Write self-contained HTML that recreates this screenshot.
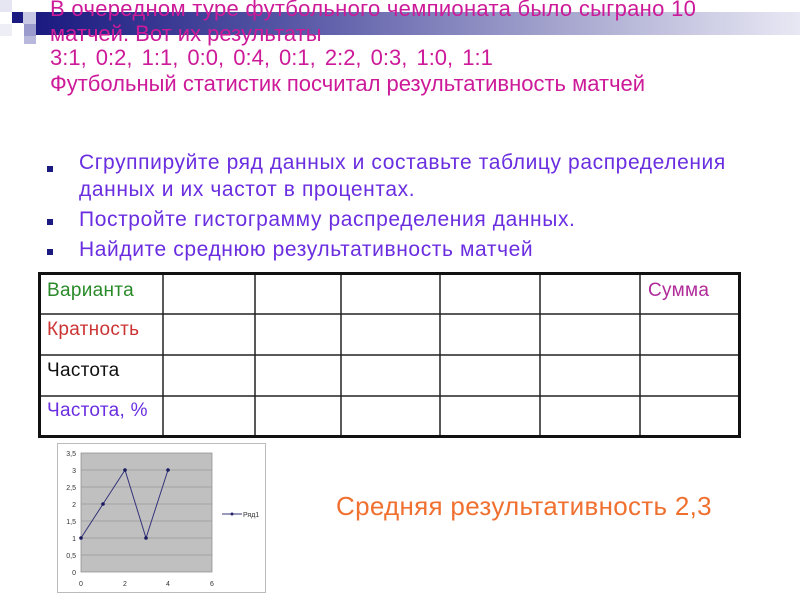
<!DOCTYPE html>
<html><head><meta charset="utf-8"><style>
body{margin:0;width:800px;height:600px;position:relative;background:#fff;overflow:hidden;font-family:"Liberation Sans",sans-serif}
.a{position:absolute;white-space:nowrap}
.t{color:#cc1a99;font-size:22px;line-height:25px}
.b{color:#6a2ee0;font-size:21px;letter-spacing:0.6px;line-height:24px}
.sq{position:absolute;width:6px;height:6px;background:#1a1a80}
.c{position:absolute;font-size:19px;line-height:22px;letter-spacing:0.3px}
</style></head><body>
<div class="a" style="left:36px;top:12px;width:764px;height:23px;background:linear-gradient(90deg,#1a1a80 0%,#5a5aa8 35%,#a8a8d0 70%,#e8e8f4 100%)"></div>
<div class="a" style="left:0;top:0;width:12px;height:12px;background:#e6e6f2"></div>
<div class="a" style="left:12px;top:12px;width:11px;height:11px;background:#1a1a80"></div>
<div class="a" style="left:23px;top:12px;width:13px;height:12px;background:#c8c8e4"></div>
<div class="a" style="left:24px;top:24px;width:12px;height:12px;background:#9a9acc"></div>
<div class="a" style="left:0;top:24px;width:12px;height:12px;background:#eeeef6"></div>
<div class="a" style="left:24px;top:36px;width:12px;height:8px;background:#b8b8dc"></div>
<div class="a t" style="left:50px;top:-4px;letter-spacing:0.3px">В очередном туре футбольного чемпионата было сыграно 10</div>
<div class="a t" style="left:50px;top:21px">матчей. Вот их результаты</div>
<div class="a t" style="left:50px;top:45px;word-spacing:3px">3:1, 0:2, 1:1, 0:0, 0:4, 0:1, 2:2, 0:3, 1:0, 1:1</div>
<div class="a t" style="left:50px;top:71px">Футбольный статистик посчитал результативность матчей</div>
<div class="sq" style="left:47px;top:166px"></div>
<div class="sq" style="left:47px;top:219px"></div>
<div class="sq" style="left:47px;top:249px"></div>
<div class="a b" style="left:79px;top:151px">Сгруппируйте ряд данных и составьте таблицу распределения</div>
<div class="a b" style="left:79px;top:178px">данных и их частот в процентах.</div>
<div class="a b" style="left:79px;top:208px">Постройте гистограмму распределения данных.</div>
<div class="a b" style="left:79px;top:238px">Найдите среднюю результативность матчей</div>
<svg class="a" style="left:0;top:0" width="800" height="600">
<g stroke="#222" stroke-width="1.5">
<line x1="163" y1="273" x2="163" y2="437"/><line x1="255" y1="273" x2="255" y2="437"/><line x1="341" y1="273" x2="341" y2="437"/><line x1="440" y1="273" x2="440" y2="437"/><line x1="540" y1="273" x2="540" y2="437"/><line x1="640" y1="273" x2="640" y2="437"/>
<line x1="39" y1="314" x2="739" y2="314"/><line x1="39" y1="355" x2="739" y2="355"/><line x1="39" y1="396" x2="739" y2="396"/>
</g>
<rect x="39.5" y="273.5" width="700" height="163" fill="none" stroke="#111" stroke-width="3"/>
<rect x="57.5" y="443.5" width="208" height="149" fill="#fff" stroke="#bbb"/>
<rect x="81" y="453" width="131" height="119" fill="#c0c0c0" stroke="#888" stroke-width="0.7"/>
<g stroke="#999" stroke-width="0.8"><line x1="81" y1="470" x2="212" y2="470"/><line x1="81" y1="487" x2="212" y2="487"/><line x1="81" y1="504" x2="212" y2="504"/><line x1="81" y1="521" x2="212" y2="521"/><line x1="81" y1="538" x2="212" y2="538"/><line x1="81" y1="555" x2="212" y2="555"/></g>
<polyline points="81,538 103,504 125,470 146,538 168,470" fill="none" stroke="#33337a" stroke-width="1"/>
<g fill="#1a1a60"><circle cx="81" cy="538" r="1.8"/><circle cx="103" cy="504" r="1.8"/><circle cx="125" cy="470" r="1.8"/><circle cx="146" cy="538" r="1.8"/><circle cx="168" cy="470" r="1.8"/><circle cx="232" cy="514" r="1.5"/></g>
<line x1="222" y1="514" x2="242" y2="514" stroke="#33337a"/>
<g font-family="Liberation Sans" font-size="7" fill="#333" text-anchor="end"><text x="76" y="456">3,5</text><text x="76" y="473">3</text><text x="76" y="490">2,5</text><text x="76" y="507">2</text><text x="76" y="524">1,5</text><text x="76" y="541">1</text><text x="76" y="558">0,5</text><text x="76" y="575">0</text></g>
<g font-family="Liberation Sans" font-size="7" fill="#333" text-anchor="middle"><text x="81" y="586">0</text><text x="125" y="586">2</text><text x="168" y="586">4</text><text x="212" y="586">6</text></g>
<text x="243" y="517" font-family="Liberation Sans" font-size="7" fill="#333">Ряд1</text>
</svg>
<div class="c" style="left:47px;top:280px;color:#2a8a2a">Варианта</div>
<div class="c" style="left:47px;top:319px;color:#cc3333">Кратность</div>
<div class="c" style="left:47px;top:360px;color:#111">Частота</div>
<div class="c" style="left:47px;top:400px;color:#6a2ee0">Частота, %</div>
<div class="c" style="left:648px;top:280px;color:#b02a9a">Сумма</div>
<div class="a" style="left:336px;top:491px;font-size:26px;line-height:30px;letter-spacing:0.3px;color:#f07030">Средняя результативность 2,3</div>
</body></html>
